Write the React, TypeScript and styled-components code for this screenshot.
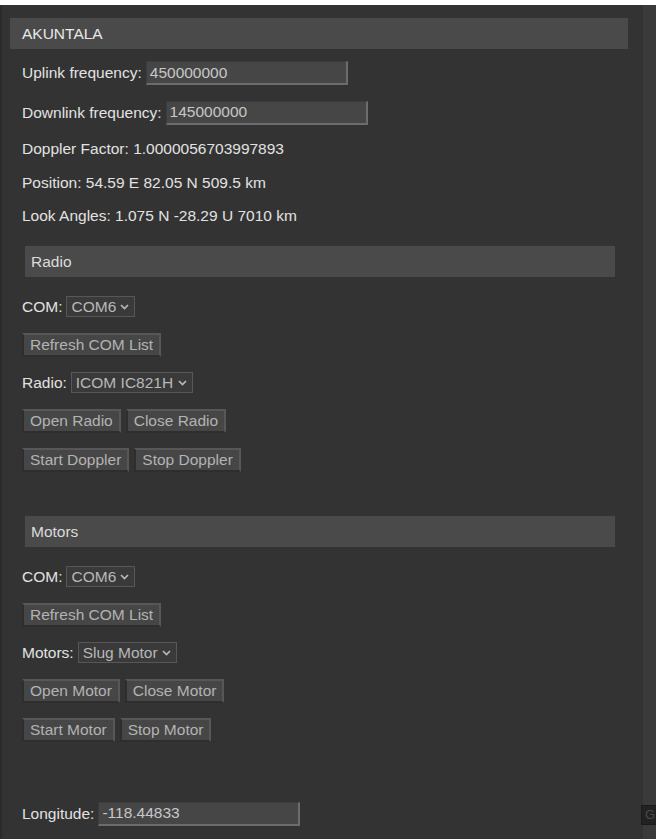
import styled, { createGlobalStyle } from "styled-components";
import { FC } from 'react';

const Global = createGlobalStyle`
  body {
    margin: 0;
    background: #ffffff;
    font-family: "Liberation Sans", Arial, sans-serif;
    font-size: 15.5px;
  }
`;

const Chevron: FC = () => (
  <svg width="9" height="6" viewBox="0 0 9 6">
    <polyline points="1,1 4.5,4.5 8,1" fill="none" stroke="#b8b8b8" strokeWidth="1.7" />
  </svg>
);

const Field: FC<{ label: string; value: string }> = ({ label, value }) => (
  <Row>
    <Label>{label}</Label>
    <Input defaultValue={value} />
  </Row>
);

const Choice: FC<{ label: string; value: string }> = ({ label, value }) => (
  <Row>
    <Label>{label}</Label>
    <SelectBox>
      <NativeSelect defaultValue={value}>
        <option>{value}</option>
      </NativeSelect>
      <Chevron />
    </SelectBox>
  </Row>
);

const App: FC = () => {
  return (
    <>
      <Global />
      <Page>
        <LeftEdge />
        <Panel>
          <Title>AKUNTALA</Title>
          <Body>
            <Field label="Uplink frequency:" value="450000000" />
            <Field label="Downlink frequency:" value="145000000" />
            <Info>Doppler Factor: 1.0000056703997893</Info>
            <Info>Position: 54.59 E 82.05 N 509.5 km</Info>
            <Info>Look Angles: 1.075 N -28.29 U 7010 km</Info>

            <SubHeader $above={5.5} $below={3.5}>Radio</SubHeader>
            <Choice label="COM:" value="COM6" />
            <Row><Button>Refresh COM List</Button></Row>
            <Choice label="Radio:" value="ICOM IC821H" />
            <Row>
              <Button>Open Radio</Button>
              <Button>Close Radio</Button>
            </Row>
            <Row>
              <Button>Start Doppler</Button>
              <Button>Stop Doppler</Button>
            </Row>

            <SubHeader $above={28} $below={4}>Motors</SubHeader>
            <Choice label="COM:" value="COM6" />
            <Row><Button>Refresh COM List</Button></Row>
            <Choice label="Motors:" value="Slug Motor" />
            <Row>
              <Button>Open Motor</Button>
              <Button>Close Motor</Button>
            </Row>
            <Row>
              <Button>Start Motor</Button>
              <Button>Stop Motor</Button>
            </Row>

            <Longitude>
              <Field label="Longitude:" value="-118.44833" />
            </Longitude>
          </Body>
        </Panel>
        <RightStrip />
        <HiddenButton>G</HiddenButton>
      </Page>
    </>
  );
};

export default App;

const Page = styled.div`
    position:relative;
    display:flex;
    margin-top:5px;
    height:calc(100vh - 5px);
    overflow:hidden;
`;

const LeftEdge = styled.div`
    width:2px;
    background:#2b2b2b;
`;

const Panel = styled.div`
    width:641px;
    box-sizing:border-box;
    padding-top:13px;
    background:#333333;
`;

const RightStrip = styled.div`
    flex:1;
    background:#3a3a3a;
`;

const HiddenButton = styled.div`
    position:absolute;
    left:641px;
    top:800px;
    width:15px;
    height:20px;
    box-sizing:border-box;
    padding-left:3px;
    background:#222222;
    border:1px solid #1a1a1a;
    border-right:none;
    color:#4a4a4a;
    font-size:13px;
    line-height:18px;
`;

const Title = styled.div`
    width:618px;
    height:31px;
    box-sizing:border-box;
    margin:0 0 12px 8px;
    padding-left:12px;
    background:#4a4a4a;
    color:#e8e8e8;
    line-height:31px;
`;

const Body = styled.div`
    display:flex;
    flex-direction:column;
    gap:15.5px;
    padding-left:20px;
`;

const Row = styled.div`
    display:flex;
    align-items:center;
    gap:5px;
`;

const Label = styled.span`
    color:#e2e2e2;
    line-height:18px;
    margin-right:-1px;
`;

const Info = styled.div`
    color:#e2e2e2;
    line-height:18px;
`;

const Input = styled.input`
    width:202px;
    height:24px;
    box-sizing:border-box;
    padding:0 0 0 3px;
    background:#464646;
    border-style:solid;
    border-width:1px 2px 2px 1px;
    border-color:#3c3c3c #6c6c6c #6c6c6c #3c3c3c;
    color:#c8c8c8;
    font:inherit;
    outline:none;
`;

const SelectBox = styled.span`
    display:inline-flex;
    align-items:center;
    gap:4px;
    height:21px;
    box-sizing:border-box;
    padding:0 5px 0 4px;
    background:#3a3a3a;
    border:1px solid #575757;
`;

const NativeSelect = styled.select`
    appearance:none;
    background:transparent;
    border:none;
    padding:0;
    color:#b8b8b8;
    font:inherit;
    outline:none;
`;

const Button = styled.button`
    height:24px;
    box-sizing:border-box;
    padding:0 6px;
    background:#464646;
    border-style:solid;
    border-width:2px;
    border-color:#575757 #575757 #2e2e2e #2e2e2e;
    color:#b3b3b3;
    font:inherit;
    line-height:18px;
`;

const SubHeader = styled.div<{ $above: number; $below: number }>`
    width:590px;
    height:31px;
    box-sizing:border-box;
    margin:${p => p.$above}px 0 ${p => p.$below}px 3px;
    padding-left:6px;
    background:#4a4a4a;
    color:#dcdcdc;
    line-height:31px;
`;

const Longitude = styled.div`
    margin-top:44px;
`;
